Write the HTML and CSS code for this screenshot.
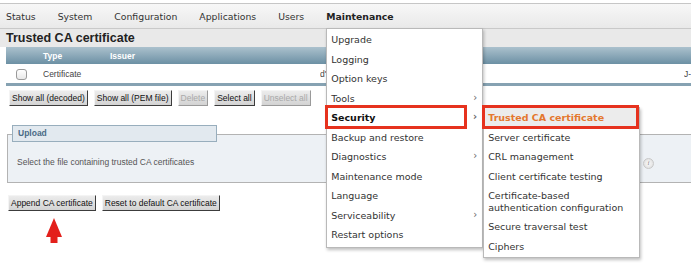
FILE: index.html
```html
<!DOCTYPE html>
<html lang="en">
<head>
    <meta charset="UTF-8">
    <title>Trusted CA certificate</title>
    <link rel="stylesheet" href="styles.css">
</head>
<body>
    <!-- Barra de navegación -->
    <nav class="nav">
        <span class="nav-item">Status</span>
        <span class="nav-item">System</span>
        <span class="nav-item">Configuration</span>
        <span class="nav-item">Applications</span>
        <span class="nav-item">Users</span>
        <div class="nav-item active">Maintenance
            <ul class="menu">
                <li>Upgrade</li>
                <li>Logging</li>
                <li>Option keys</li>
                <li class="has-sub">Tools</li>
                <li class="has-sub current marked">Security
                    <ul class="submenu">
                        <li class="selected marked">Trusted CA certificate</li>
                        <li>Server certificate</li>
                        <li>CRL management</li>
                        <li>Client certificate testing</li>
                        <li class="two-line">Certificate-based<br>authentication configuration</li>
                        <li>Secure traversal test</li>
                        <li>Ciphers</li>
                    </ul>
                </li>
                <li>Backup and restore</li>
                <li class="has-sub">Diagnostics</li>
                <li>Maintenance mode</li>
                <li>Language</li>
                <li class="has-sub">Serviceability</li>
                <li>Restart options</li>
            </ul>
        </div>
    </nav>

    <h1 class="page-title">Trusted CA certificate</h1>

    <table class="cert-table">
        <colgroup>
            <col class="col-check">
            <col class="col-type">
            <col class="col-issuer">
            <col class="col-subject">
            <col class="col-valid">
        </colgroup>
        <thead>
            <tr>
                <th></th>
                <th>Type</th>
                <th>Issuer</th>
                <th></th>
                <th></th>
            </tr>
        </thead>
        <tbody>
            <tr>
                <td><span class="checkbox"></span></td>
                <td>Certificate</td>
                <td></td>
                <td>d'</td>
                <td>J-</td>
            </tr>
        </tbody>
    </table>

    <div class="btn-row top-buttons">
        <button class="btn">Show all (decoded)</button>
        <button class="btn">Show all (PEM file)</button>
        <button class="btn" disabled>Delete</button>
        <button class="btn">Select all</button>
        <button class="btn" disabled>Unselect all</button>
    </div>

    <div class="upload">
        <div class="legend">Upload</div>
        <div class="upload-row">
            <p class="upload-text">Select the file containing trusted CA certificates</p>
            <span class="info-icon">i</span>
        </div>
    </div>

    <div class="btn-row bottom-buttons">
        <button class="btn">Append CA certificate</button>
        <button class="btn">Reset to default CA certificate</button>
    </div>

    <div class="arrow">
        <svg width="16" height="26" viewBox="0 0 16 26">
            <polygon points="8,0 16,19 0,19" fill="#e3201b"/>
            <rect x="4.5" y="18" width="7" height="7" fill="#e3201b"/>
        </svg>
    </div>
</body>
</html>
```

FILE: styles.css
```css
/* Estilos generales */
html {
    overflow: hidden;
}

body {
    margin: 0;
    min-height: 100vh;
    font-family: "Liberation Sans", Arial, sans-serif;
    font-size: 8.5px;
    color: #333;
    background: #fff;
}

/* Navegación */
.nav {
    display: flex;
    gap: 22px;
    height: 24px;
    margin-top: 3px;
    padding-left: 6px;
    border-top: 1px solid #c6c6c6;
    border-bottom: 1px solid #c9c9c9;
    background: linear-gradient(#f7f7f7, #e9e9e9);
    font-family: "DejaVu Sans", Verdana, sans-serif;
    font-size: 9.3px;
    color: #333;
}

.nav-item {
    display: flex;
    align-items: center;
}

.nav-item.active {
    position: relative;
    font-weight: bold;
    color: #222;
}

/* Menú desplegable */
.menu,
.submenu {
    position: absolute;
    list-style: none;
    margin: 0;
    width: 155px;
    background: #fff;
    border: 1px solid #b9b9b9;
    box-shadow: 1px 2px 3px rgba(0, 0, 0, 0.25);
    font-size: 9.5px;
    font-weight: normal;
    color: #333;
    z-index: 10;
}

.menu {
    top: 100%;
    left: 0;
    padding: 1px 0 2px;
}

.menu li,
.submenu li {
    position: relative;
    height: 19.5px;
    line-height: 19.5px;
    padding-left: 4px;
    white-space: nowrap;
}

.menu li.has-sub::after {
    content: "›";
    position: absolute;
    right: 5px;
    top: -1px;
    color: #666;
    font-size: 10px;
}

.menu li.current {
    font-weight: bold;
    color: #111;
}

.submenu {
    top: -1px;
    left: 156px;
    padding: 0 0 1px;
}

.submenu li {
    font-weight: normal;
    color: #333;
}

.submenu li.selected {
    background: #ececec;
    color: #e4782f;
    font-weight: bold;
}

.submenu li.two-line {
    height: auto;
    line-height: 12px;
    padding-top: 3.5px;
    padding-bottom: 3.5px;
}

/* Recuadros rojos */
.menu li.marked::before {
    content: "";
    position: absolute;
    top: -3px;
    bottom: -1px;
    left: -2px;
    right: 15px;
    border: 3px solid #e6321e;
}

.submenu li.marked::before {
    right: 0;
}

/* Título */
.page-title {
    margin: 0;
    height: 18px;
    line-height: 18px;
    padding-left: 6px;
    background: #e9e9e9;
    font-size: 12.5px;
    font-weight: bold;
    color: #222;
}

/* Tabla */
.cert-table {
    margin-left: 6px;
    width: 900px;
    table-layout: fixed;
    border-collapse: collapse;
    border-bottom: 3px solid #86a2b2;
}

.col-check { width: 37px; }
.col-type { width: 67px; }
.col-issuer { width: 210px; }
.col-subject { width: 364px; }

.cert-table th {
    height: 17px;
    padding: 0;
    text-align: left;
    color: #fff;
    font-weight: bold;
    background: linear-gradient(#abc1cd, #6c90a4);
}

.cert-table td {
    height: 18px;
    padding: 1px 0 0;
    background: #fff;
    border-bottom: 1px solid #dcdcdc;
    color: #444;
    white-space: nowrap;
    overflow: hidden;
}

.checkbox {
    display: block;
    width: 9px;
    height: 9px;
    margin-left: 10px;
    border: 1px solid #9a9a9a;
    border-radius: 3px;
    background: linear-gradient(#fff, #e8e8e8);
}

/* Botones */
.btn-row {
    display: flex;
    gap: 6px;
}

.top-buttons {
    margin-top: 4px;
    padding-left: 9px;
}

.bottom-buttons {
    margin-top: 12px;
    padding-left: 8px;
}

.btn {
    height: 16px;
    padding: 0 2px;
    font-family: "Liberation Sans", Arial, sans-serif;
    font-size: 8.5px;
    color: #111;
    background: linear-gradient(#ececec, #d3d3d3);
    border: 1px solid;
    border-color: #f4f4f4 #3c3c3c #3c3c3c #f4f4f4;
    border-radius: 0;
}

.btn:disabled {
    color: #a9a9a9;
    border-color: #f4f4f4 #9a9a9a #9a9a9a #f4f4f4;
}

/* Sección de carga */
.upload {
    width: 720px;
    height: 47px;
    margin: 28px 0 0 7px;
    border: 1px solid #b3b3b3;
    background: #edf1f5;
}

.legend {
    width: 198px;
    height: 15px;
    line-height: 15px;
    margin: -10px 0 0 4px;
    padding-left: 5px;
    border: 1px solid #98aebd;
    background: #e2e9ef;
    color: #4a6b86;
    font-weight: bold;
}

.upload-row {
    display: flex;
    align-items: center;
    justify-content: space-between;
    margin-top: 12px;
    padding-left: 9px;
    padding-right: 74px;
}

.upload-text {
    margin: 0;
    line-height: 12px;
    color: #555;
}

.info-icon {
    width: 9px;
    height: 9px;
    margin-top: 4px;
    line-height: 9px;
    border: 1px solid #c8c8c8;
    border-radius: 50%;
    background: radial-gradient(#fafafa, #dadada);
    color: #888;
    font-family: "Liberation Serif", serif;
    font-style: italic;
    font-size: 7px;
    text-align: center;
}

/* Flecha roja */
.arrow {
    margin: 7px 0 0 46px;
    height: 26px;
}
```
